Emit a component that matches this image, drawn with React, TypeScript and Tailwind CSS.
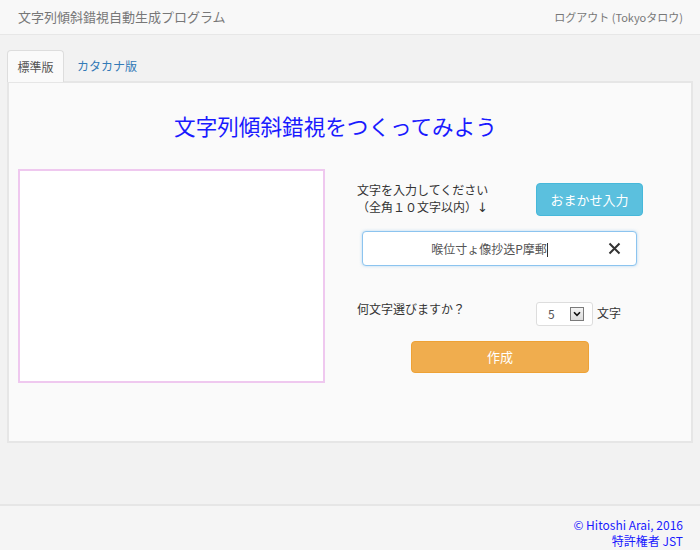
import React from "react";

const font = { fontFamily: '"Noto Sans CJK JP", "Noto Sans", sans-serif' };

export default function App() {
  return (
    <div className="h-[550px] w-[700px] flex flex-col bg-[#f2f2f2] text-[#333]" style={font}>
      <header className="h-[35px] shrink-0 bg-[#f8f8f8] border-b border-[#e7e7e7] flex items-center justify-between pl-[18px] pr-[17px]">
        <span className="text-[13px] text-[#777]">文字列傾斜錯視自動生成プログラム</span>
        <span className="text-[11px] text-[#777]">ログアウト (Tokyoタロウ)</span>
      </header>

      <main className="flex-1 px-[7px] pt-[15px]">
        <div className="flex h-[31px] items-end">
          <div className="h-[32px] w-[57px] -mb-[1px] relative z-10 bg-[#fafafa] border border-[#dddddd] border-b-0 rounded-t-[4px] flex items-center justify-center text-[12px] text-[#555]">
            標準版
          </div>
          <div className="h-[31px] pl-[13px] flex items-center text-[12px] text-[#337ab7]">カタカナ版</div>
        </div>
        <div className="h-[362px] bg-[#fafafa] border-2 border-[#e6e6e6] pl-[9px]">
          <h1 className="pt-[28px] h-[86px] text-center text-[21.6px] leading-[30px] text-[#1a1aff] pr-[38px]">
            文字列傾斜錯視をつくってみよう
          </h1>
          <div className="flex">
            <div className="w-[307px] h-[214px] border-2 border-[#efc8ef] bg-white" />
            <div className="ml-[32px] pt-[14px] flex flex-col">
              <div className="flex h-[33px]">
                <div className="w-[179px] text-[12px] leading-[17px] -mt-[2px]">
                  <div>文字を入力してください</div>
                  <div>
                    （全角１０文字以内）
                    <span className="text-[#333] text-[13px]" style={{ fontFamily: '"DejaVu Sans", sans-serif' }}>
                      ↓
                    </span>
                  </div>
                </div>
                <button className="w-[107px] h-[33px] rounded-[4px] bg-[#5bc0de] border border-[#46b8da] text-white text-[13px]">
                  おまかせ入力
                </button>
              </div>
              <div className="mt-[15px] ml-[5px] w-[275px] h-[35px] rounded-[4px] border border-[#8cc4ef] bg-white shadow-[0_0_3px_rgba(102,175,233,0.5)] flex items-center relative">
                <span className="flex-1 text-center text-[12px] text-[#555] pl-[8px]">
                  喉位寸ょ像抄迭P摩郵<span className="inline-block w-px h-[14px] bg-[#333] align-middle" />
                </span>
                <svg className="mr-[15px]" width="13" height="13" viewBox="0 0 13 13">
                  <path d="M1.5 1.5 L11.5 11.5 M11.5 1.5 L1.5 11.5" stroke="#333" strokeWidth="2" />
                </svg>
              </div>
              <div className="mt-[36px] flex h-[24px]">
                <div className="w-[179px] text-[12px] leading-[18px] -mt-[2px]">何文字選びますか？</div>
                <div className="w-[57px] h-[24px] rounded-[3px] border border-[#dddddd] bg-white flex items-center">
                  <span className="ml-[11px] text-[12px] text-[#555] w-[22px]">5</span>
                  <div className="w-[14px] h-[14px] border border-[#7a7a7a] bg-gradient-to-b from-[#f4f4f4] to-[#dcdcdc] flex items-center justify-center">
                    <svg width="8" height="6" viewBox="0 0 8 6">
                      <path d="M1 1.2 L4 4.3 L7 1.2" stroke="#111" strokeWidth="1.6" fill="none" />
                    </svg>
                  </div>
                </div>
                <span className="ml-[4px] text-[12px] leading-[22px]">文字</span>
              </div>
              <button className="mt-[15px] ml-[54px] w-[178px] h-[32px] rounded-[4px] bg-[#f0ad4e] border border-[#eea236] text-white text-[13px]">
                作成
              </button>
            </div>
          </div>
        </div>
      </main>

      <footer className="h-[46px] shrink-0 bg-[#f5f5f5] border-t-2 border-[#e6e6e6] pr-[17px] pt-[11px] text-right text-[12px] leading-[16px] text-[#1a1aff]">
        <div>© Hitoshi Arai, 2016</div>
        <div>特許権者 JST</div>
      </footer>
    </div>
  );
}
